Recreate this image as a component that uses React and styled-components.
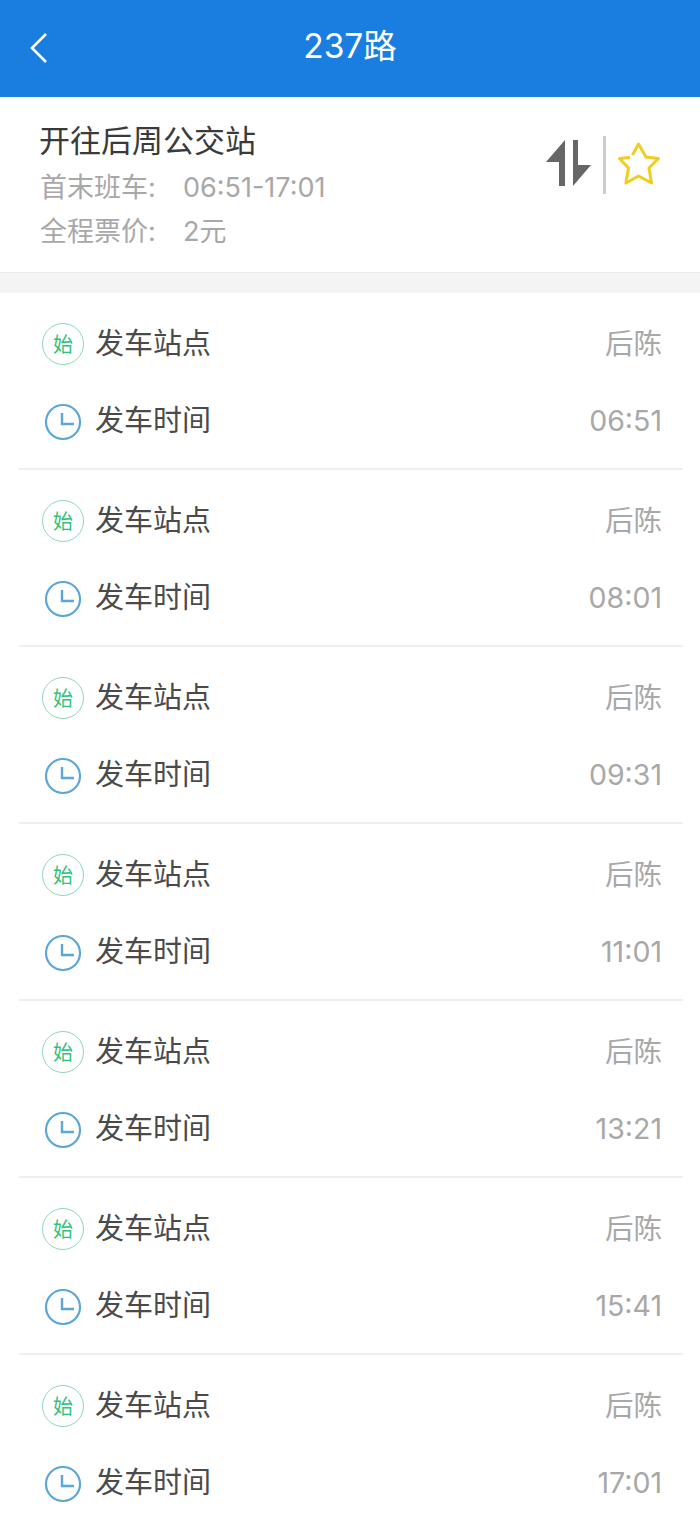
import React from 'react';
import styled, { createGlobalStyle } from 'styled-components';

const GlobalStyle = createGlobalStyle`
html, body {
  margin: 0;
  padding: 0;
  background: #fff;
}
body {
  font-family: "Noto Sans CJK SC", "Noto Sans", sans-serif;
}
`;

const digitFont = '"Inter", "Noto Sans CJK SC", sans-serif';

const Page = styled.div`
width: 700px;
height: 1514px;
overflow: hidden;
background: #fff;
`;
const Header = styled.header`
height: 97px;
background: #1a7de0;
position: relative;
display: flex;
align-items: center;
justify-content: center;
`;
const BackButton = styled.button`
position: absolute;
left: 28px;
top: 31px;
width: 24px;
height: 34px;
padding: 0;
border: none;
background: transparent;
`;
const HeaderTitle = styled.h1`
margin: 0 0 4px;
font-family: ${digitFont};
font-size: 33.5px;
font-weight: 400;
line-height: 93px;
color: #fff;
`;
const InfoCard = styled.section`
height: 176px;
padding: 0 40px;
box-sizing: border-box;
display: flex;
align-items: flex-start;
justify-content: space-between;
border-bottom: 1px solid #ececec;
`;
const InfoText = styled.div`
display: flex;
flex-direction: column;
padding-top: 18px;
`;
const RouteName = styled.div`
margin: 0 0 3px -1px;
font-size: 31px;
line-height: 48px;
color: #3a3a3a;
`;
const InfoLine = styled.div`
display: flex;
font-family: ${digitFont};
font-size: 27px;
line-height: 44px;
color: #a8a8a8;
`;
const InfoLabel = styled.span`
width: 143px;
`;
const Actions = styled.div`
display: flex;
align-items: center;
margin: 39px -1px 0 0;
`;
const ActionIcon = styled.div`
display: flex;
margin-bottom: ${(p) => p.$lift}px;
`;
const ActionDivider = styled.div`
width: 3px;
height: 58px;
margin: 0 11px 0 10px;
background: #cdcdcd;
`;
const Band = styled.div`
height: 20px;
background: #f4f4f4;
`;
const Trip = styled.div`
height: 177px;
box-sizing: border-box;
margin: 0 17px 0 19px;
padding-top: 12px;
border-bottom: 2px solid ${(p) => (p.$last ? 'transparent' : '#efefef')};
`;
const Row = styled.div`
height: 77px;
padding: 0 21px 0 23px;
display: flex;
align-items: center;
`;
const RowIcon = styled.div`
width: 42px;
height: 42px;
margin-right: 11px;
display: flex;
align-items: center;
justify-content: center;
flex-shrink: 0;
`;
const ClockSlot = styled(RowIcon)`
padding-top: 2px;
`;
const StartBadge = styled.div`
width: 42px;
height: 42px;
box-sizing: border-box;
border: 1.5px solid #8fd8b5;
border-radius: 50%;
display: flex;
align-items: center;
justify-content: center;
font-size: 20px;
line-height: 1;
color: #2fc27b;
`;
const RowLabel = styled.span`
flex: 1;
padding-bottom: 6px;
font-size: 29px;
line-height: 40px;
color: #4a4a4a;
`;
const RowValue = styled.span`
font-family: ${digitFont};
font-size: 28.5px;
line-height: 40px;
color: #a8a8a8;
`;

const BackIcon = () => (
  <svg width="24" height="34" viewBox="0 0 24 34" fill="none">
    <path d="M18 3 L4 17 L18 31" stroke="#fff" strokeWidth="2.6" />
  </svg>
);

const SwapIcon = () => (
  <svg width="48" height="48" viewBox="0 0 48 48">
    <path d="M20 1 V47 H14 V23 H1 Z" fill="#666" />
    <path d="M28 1 H33 V26 H46 L28 47 Z" fill="#666" />
  </svg>
);

const StarIcon = () => (
  <svg width="44" height="44" viewBox="0 0 44 44" fill="none">
    <path
      d="M13 15.5 L2.5 16.5 L11.5 26 L9 41 L21.5 34 L34.5 41 L32 26 L41.5 16.5 L29 15 L21.5 2 L15.5 13"
      stroke="#f0cd1e"
      strokeWidth="3"
      strokeLinejoin="round"
    />
  </svg>
);

const ClockIcon = () => (
  <svg width="38" height="38" viewBox="0 0 38 38" fill="none" stroke="#5aa7d8">
    <circle cx="19" cy="19" r="17" strokeWidth="2.2" />
    <path d="M18 10 V21 H30" strokeWidth="2.4" />
  </svg>
);

const departures = ['06:51', '08:01', '09:31', '11:01', '13:21', '15:41', '17:01'];

export default function App() {
  return (
    <Page>
      <GlobalStyle />
      <Header>
        <BackButton><BackIcon /></BackButton>
        <HeaderTitle>237路</HeaderTitle>
      </Header>
      <InfoCard>
        <InfoText>
          <RouteName>开往后周公交站</RouteName>
          <InfoLine><InfoLabel>首末班车:</InfoLabel>06:51-17:01</InfoLine>
          <InfoLine><InfoLabel>全程票价:</InfoLabel>2元</InfoLine>
        </InfoText>
        <Actions>
          <ActionIcon $lift={5}><SwapIcon /></ActionIcon>
          <ActionDivider />
          <ActionIcon $lift={3}><StarIcon /></ActionIcon>
        </Actions>
      </InfoCard>
      <Band />
      {departures.map((time, i) => (
        <Trip key={time} $last={i === departures.length - 1}>
          <Row>
            <RowIcon><StartBadge>始</StartBadge></RowIcon>
            <RowLabel>发车站点</RowLabel>
            <RowValue>后陈</RowValue>
          </Row>
          <Row>
            <ClockSlot><ClockIcon /></ClockSlot>
            <RowLabel>发车时间</RowLabel>
            <RowValue>{time}</RowValue>
          </Row>
        </Trip>
      ))}
    </Page>
  );
}
